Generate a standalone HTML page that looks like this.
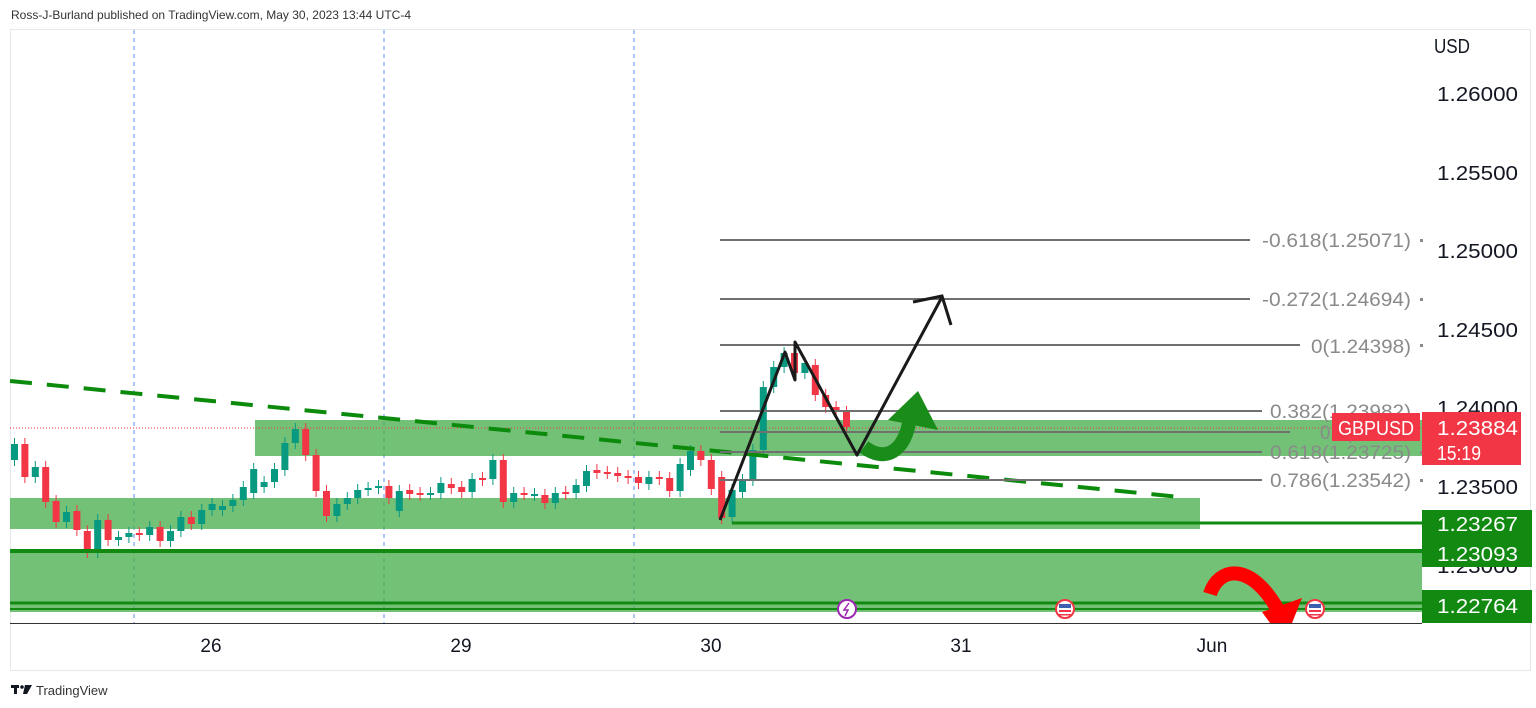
<!DOCTYPE html>
<html><head><meta charset="utf-8"><style>
html,body{margin:0;padding:0;background:#fff;width:1536px;height:708px;overflow:hidden;font-family:"Liberation Sans",sans-serif}
</style></head><body>
<svg width="1536" height="708" xmlns="http://www.w3.org/2000/svg" font-family="Liberation Sans, sans-serif">
<text x="11" y="19" font-size="12" fill="#333">Ross-J-Burland published on TradingView.com, May 30, 2023 13:44 UTC-4</text>
<rect x="10.5" y="29.5" width="1520" height="641" fill="#fff" stroke="#e6e8ec"/>
<g stroke="#5b8def" stroke-width="1" stroke-dasharray="4 4">
<line x1="134" y1="30" x2="134" y2="623"/><line x1="384" y1="30" x2="384" y2="623"/><line x1="634" y1="30" x2="634" y2="623"/>
</g>
<g fill="#4caf50" fill-opacity="0.78">
<rect x="255" y="420" width="1167" height="36"/>
<rect x="10" y="498" width="1190" height="31"/>
<rect x="10" y="550" width="1412" height="62"/>
</g>
<line x1="10" y1="428" x2="1422" y2="428" stroke="#f23645" stroke-width="1" stroke-dasharray="1 2"/>
<g id="candles"></g>
<g stroke="#128a12">
<line x1="732" y1="523" x2="1422" y2="523" stroke-width="3"/>
<line x1="10" y1="551" x2="1422" y2="551" stroke-width="4"/>
<line x1="10" y1="603" x2="1422" y2="603" stroke-width="3"/>
<line x1="10" y1="609" x2="1422" y2="609" stroke-width="2"/>
</g>
<line x1="10" y1="381" x2="1180" y2="497" stroke="#0b8a0b" stroke-width="4" stroke-dasharray="22 15"/>
<g stroke="#707070" stroke-width="2">
<line x1="720" y1="240" x2="1250" y2="240"/>
<line x1="720" y1="299" x2="1250" y2="299"/>
<line x1="720" y1="345" x2="1300" y2="345"/>
<line x1="720" y1="411" x2="1262" y2="411"/>
<line x1="720" y1="432" x2="1290" y2="432"/>
<line x1="720" y1="452" x2="1262" y2="452"/>
<line x1="720" y1="480" x2="1262" y2="480"/>
</g>
<g font-size="19" fill="#8a8a8a" lengthAdjust="spacingAndGlyphs">
<text x="1262" y="247" textLength="149" lengthAdjust="spacingAndGlyphs">-0.618(1.25071)</text>
<text x="1262" y="306" textLength="149" lengthAdjust="spacingAndGlyphs">-0.272(1.24694)</text>
<text x="1311" y="353" textLength="100" lengthAdjust="spacingAndGlyphs">0(1.24398)</text>
<text x="1270" y="418" textLength="141" lengthAdjust="spacingAndGlyphs">0.382(1.23982)</text>
<text x="1320" y="439" textLength="32" lengthAdjust="spacingAndGlyphs">0.5(</text>
<text x="1270" y="459" textLength="141" lengthAdjust="spacingAndGlyphs">0.618(1.23725)</text>
<text x="1270" y="487" textLength="141" lengthAdjust="spacingAndGlyphs">0.786(1.23542)</text>
</g>
<g fill="#8a8a8a"><rect x="1420" y="239" width="3" height="3"/><rect x="1420" y="298" width="3" height="3"/><rect x="1420" y="344" width="3" height="3"/><rect x="1420" y="451" width="3" height="3"/><rect x="1420" y="479" width="3" height="3"/></g>
<!-- green arrow -->
<path d="M864 447 C885 463 905 452 910 418" fill="none" stroke="#1a8c1a" stroke-width="14"/>
<path d="M888 420 L918 391 L938 430 Z" fill="#1a8c1a"/>
<polyline points="720,520 785,352 795,380 795,342 857,455 942,297" fill="none" stroke="#1a1a1a" stroke-width="3" stroke-linejoin="round"/>
<polyline points="913,302 942,296 951,325" fill="none" stroke="#1a1a1a" stroke-width="3"/>
<!-- red arrow -->
<path d="M1210 594 C1218 568 1250 560 1278 610" fill="none" stroke="#ff0000" stroke-width="14"/>
<path d="M1262 612 L1302 598 L1292 623 L1270 623 Z" fill="#ff0000"/>
<circle cx="847" cy="609" r="9" fill="#fff" stroke="#9c27b0" stroke-width="2"/>
<path d="M849 603 L844 610 L848 610 L845 616" stroke="#9c27b0" stroke-width="1.5" fill="none"/>
<g><circle cx="1065" cy="609" r="9" fill="#fff" stroke="#f23645" stroke-width="2"/><rect x="1059" y="604" width="12" height="4" fill="#3d5fb0"/><rect x="1059" y="610" width="12" height="2" fill="#f23645"/><rect x="1059" y="614" width="12" height="1.5" fill="#f23645"/></g>
<g><circle cx="1315" cy="609" r="9" fill="#fff" stroke="#f23645" stroke-width="2"/><rect x="1309" y="604" width="12" height="4" fill="#3d5fb0"/><rect x="1309" y="610" width="12" height="2" fill="#f23645"/><rect x="1309" y="614" width="12" height="1.5" fill="#f23645"/></g>
<line x1="10" y1="623.5" x2="1422" y2="623.5" stroke="#333" stroke-width="1"/>
<g font-size="19" fill="#131722" text-anchor="middle">
<text x="211" y="652">26</text><text x="461" y="652">29</text><text x="711" y="652">30</text><text x="961" y="652">31</text><text x="1212" y="652">Jun</text>
</g>
<g font-size="20" fill="#131722">
<text x="1434" y="53" textLength="36" lengthAdjust="spacingAndGlyphs">USD</text>
<text x="1437" y="101" textLength="81" lengthAdjust="spacingAndGlyphs">1.26000</text>
<text x="1437" y="180" textLength="81" lengthAdjust="spacingAndGlyphs">1.25500</text>
<text x="1437" y="258" textLength="81" lengthAdjust="spacingAndGlyphs">1.25000</text>
<text x="1437" y="337" textLength="81" lengthAdjust="spacingAndGlyphs">1.24500</text>
<text x="1437" y="415" textLength="81" lengthAdjust="spacingAndGlyphs">1.24000</text>
<text x="1437" y="494" textLength="81" lengthAdjust="spacingAndGlyphs">1.23500</text>
<text x="1437" y="573" textLength="81" lengthAdjust="spacingAndGlyphs">1.23000</text>
</g>
<rect x="1332" y="413" width="88" height="28" fill="#f23645"/>
<text x="1338" y="435" font-size="20" fill="#fff" textLength="76" lengthAdjust="spacingAndGlyphs">GBPUSD</text>
<rect x="1422" y="412" width="99" height="53" fill="#f23645"/>
<text x="1437" y="435" font-size="20" fill="#fff" textLength="81" lengthAdjust="spacingAndGlyphs">1.23884</text>
<text x="1437" y="460" font-size="20" fill="#fff" textLength="44" lengthAdjust="spacingAndGlyphs">15:19</text>
<g fill="#128a12"><rect x="1422" y="510" width="110" height="28"/><rect x="1422" y="538" width="110" height="29"/><rect x="1422" y="590" width="110" height="33"/></g>
<g font-size="20" fill="#fff"><text x="1437" y="531" textLength="81" lengthAdjust="spacingAndGlyphs">1.23267</text><text x="1437" y="561" textLength="81" lengthAdjust="spacingAndGlyphs">1.23093</text><text x="1437" y="613" textLength="81" lengthAdjust="spacingAndGlyphs">1.22764</text></g>
<g fill="#131722"><rect x="11" y="685" width="8" height="3"/><rect x="14" y="685" width="3" height="9"/><circle cx="22" cy="687" r="1.8"/><path d="M25 685 L32 685 L27 694 L23 694 Z"/></g>
<text x="36" y="695" font-size="13" fill="#333">TradingView</text>
</svg>
<script>
var d=[[1,444,460],[0,444,477],[1,467,477],[0,467,502],[0,501,522],[1,512,522],[0,511,530],[0,531,552],[1,520,552],[0,520,540],[1,537,540],[1,533,537],[0,533,535],[1,527,535],[0,527,541],[1,531,541],[1,517,531],[0,517,524],[1,510,524],[1,504,510],[1,506,510],[1,500,506],[1,487,500],[1,469,493],[1,482,487],[1,469,482],[1,443,470],[1,429,443],[0,429,455],[0,455,491],[0,491,516],[1,504,516],[1,498,504],[1,490,498],[1,488,490],[1,486,488],[0,486,498],[1,491,511],[0,490,494],[0,493,495],[1,493,494],[1,483,493],[0,484,488],[0,487,492],[1,479,492],[0,478,480],[1,460,479],[0,460,502],[1,493,502],[0,493,494],[1,494,495],[0,495,503],[1,493,503],[0,492,494],[1,485,493],[1,471,486],[0,470,473],[0,472,473],[0,473,476],[0,476,478],[0,477,483],[1,477,484],[0,477,479],[0,478,491],[1,464,491],[1,451,470],[0,451,460],[0,460,489],[0,477,518],[1,490,517],[1,480,492],[1,450,480],[1,387,450],[1,367,387],[1,353,367],[0,353,373],[1,363,373],[0,365,395],[0,395,407],[0,407,412],[0,412,427]];
var s='';
d.forEach(function(c,i){var x=14.5+i*10.4,col=c[0]?'#089981':'#f23645',h=Math.max(c[2]-c[1],2);
s+='<line x1="'+x+'" x2="'+x+'" y1="'+(c[1]-6)+'" y2="'+(c[2]+6)+'" stroke="'+col+'" stroke-width="1"/>';
s+='<rect x="'+(x-3.5)+'" y="'+c[1]+'" width="7" height="'+h+'" fill="'+col+'"/>';});
document.getElementById('candles').innerHTML=s;
</script>
</body></html>
